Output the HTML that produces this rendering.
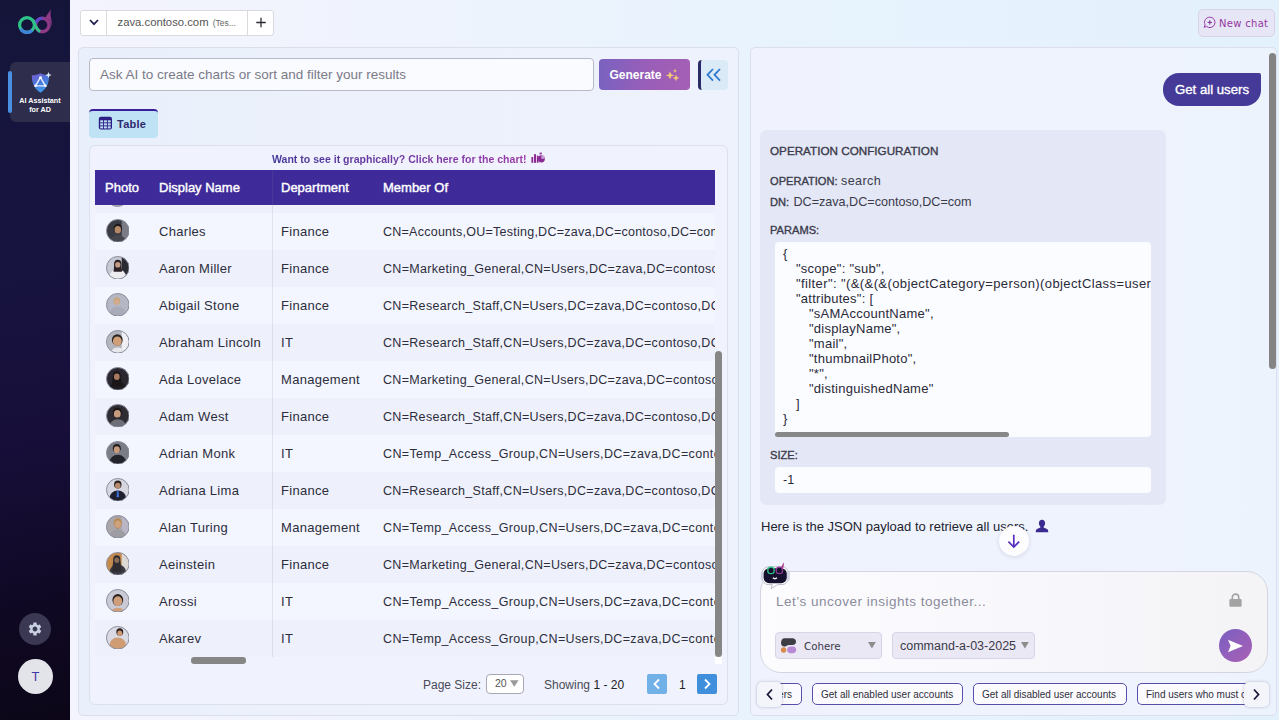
<!DOCTYPE html>
<html lang="en">
<head>
<meta charset="utf-8">
<title>AI Assistant for AD</title>
<style>
*{box-sizing:border-box;margin:0;padding:0}
html,body{width:1279px;height:720px;overflow:hidden}
body{font-family:"Liberation Sans",sans-serif;background:#eef2fd;color:#2b2b3a;position:relative;font-size:13px}
.abs{position:absolute}
#bg{left:70px;top:0;width:1209px;height:720px;background:linear-gradient(90deg,#f3f4fe 0%,#f1f3fd 17%,#e8f3fd 56%,#e3f1fd 100%)}
/* sidebar */
#side{left:0;top:0;width:70px;height:720px;background:linear-gradient(168deg,#15153a 0%,#171440 35%,#170f3a 60%,#0f0822 85%,#0c0618 100%)}
#act{left:10px;top:62px;width:60px;height:60px;background:#2e2d4b;border-radius:6px 0 0 6px}
#actbar{left:8px;top:71px;width:4px;height:42px;background:#4a90e2;border-radius:2px}
.sidetxt{color:#fff;font-weight:bold;font-size:7.2px;line-height:9px;text-align:center;left:10px;width:60px;top:96px}
#gear{left:19px;top:613px;width:32px;height:32px;border-radius:50%;background:#3a3852}
#user{left:18px;top:659px;width:35px;height:35px;border-radius:50%;background:#e3e3ea;color:#4338a8;font-size:13px;text-align:center;line-height:35px}
/* tabs bar */
#tabs{left:80px;top:10px;width:194px;height:26px;background:#fff;border:1px solid #d9d9de;border-radius:3px}
#tabs .d1{left:25px;top:0;width:1px;height:24px;background:#d9d9de}
#tabs .d2{left:166px;top:0;width:1px;height:24px;background:#d9d9de}
#tabtxt{left:117.5px;top:15px;font-size:11.3px;color:#555;white-space:nowrap;line-height:14px}
#tabtxt small{font-size:8.5px;color:#666;margin-left:1px}
/* panels */
.panel{border:1px solid #dcdeec;border-radius:5px;background:linear-gradient(90deg,#eaf0fb,#eef2fc)}
#lp{left:78px;top:47px;width:661px;height:669px}
#rp{left:750px;top:47px;width:527px;height:669px;background:linear-gradient(90deg,#f0f3fd,#edf3fd)}
#ask{left:89px;top:58px;width:505px;height:33px;border:1px solid #b9b9c6;border-radius:4px;background:#fafbff;color:#7a7a88;font-size:13.5px;line-height:31px;padding-left:10px;white-space:nowrap}
#gen{left:599px;top:59px;width:91px;height:31px;border-radius:4px;background:linear-gradient(90deg,#7a62c0 0%,#9a5eb8 55%,#a45fb5 100%);color:#fff;font-weight:bold;font-size:12px;line-height:32px;padding-left:10.5px;white-space:nowrap}
#col{left:698px;top:60px;width:30px;height:30px;border-radius:4px;background:#daeaf6;border-left:3px solid #2b2a66}
#tbtn{left:89px;top:109px;width:69px;height:29px;border-radius:4px;background:#bfe2f5;border-top:2px solid #3b1f9a;color:#2e2a6e;font-weight:bold;font-size:11px;letter-spacing:.25px;line-height:27px;white-space:nowrap}
#tc{left:89px;top:145px;width:639px;height:560px;border:1px solid #dcdfee;border-radius:6px;background:#f0f3fd}
#want{left:272px;top:151.6px;font-size:10.55px;font-weight:bold;color:#6a3aa0;line-height:14px;white-space:nowrap;background:linear-gradient(90deg,#45389a,#9a3aa8);-webkit-background-clip:text;background-clip:text;-webkit-text-fill-color:transparent}
#th{left:95px;top:170px;width:620px;height:35px;background:#3e2b99;color:#fff;font-size:13px;-webkit-text-stroke:.4px #fff;line-height:36px}
#th span{position:absolute;top:0;white-space:nowrap}
.row{left:95px;width:620px;height:37px;font-size:13px;letter-spacing:.3px;color:#2d2d3c;line-height:37px;overflow:hidden}
.row.a{background:#f3f6fe}
.row.b{background:#eef1fb}
.row span{position:absolute;top:0;white-space:nowrap}
.row .n{left:64px}
.row .d{left:186px}
.row .m{left:288px;font-size:12.5px;letter-spacing:.25px;line-height:38px}
.row .m1{letter-spacing:.31px}.row .m2{letter-spacing:.37px}
.row .av{position:absolute;left:10.5px;top:5.8px;width:23.6px;height:23.6px}
#vline{left:272px;top:170px;width:1px;height:487px;background:rgba(120,125,160,.16)}

#vs{left:715px;top:351px;width:7px;height:306px;background:#868686;border-radius:3.5px}
#vsw{left:715px;top:657px;width:7px;height:7px;background:#fff}
#hs{left:191px;top:657px;width:55px;height:6.500px;background:#868686;border-radius:3.2px}
#pg{top:677px;left:90px;width:638px;height:16px;font-size:12px;color:#4a4a58;line-height:16px;white-space:nowrap}
#pg span{position:absolute;top:0}
#psz{left:486px;top:674px;width:38px;height:20px;border:1px solid #a9a9b6;border-radius:4px;background:#fff;font-size:10.5px;color:#555;line-height:17px;padding-left:8px}
.pb{width:20px;height:20px;top:674px;border-radius:2px}
/* right panel */
#newc{left:1198px;top:9px;width:77px;height:28px;border:1px solid #d8d4e8;border-radius:5px;background:#e7e6f6;color:#93389f;font-family:"DejaVu Sans","Liberation Sans",sans-serif;font-size:10px;letter-spacing:.3px;line-height:27px;white-space:nowrap}
#rs{left:1269px;top:53px;width:7px;height:316px;background:#848484;border-radius:3.5px}
#ub{left:1163px;top:73px;width:98px;height:33px;background:#463a99;border-radius:16px 2px 16px 16px;color:#fff;-webkit-text-stroke:.35px #fff;font-size:13.2px;line-height:34px;text-align:center;white-space:nowrap}
#card{left:760px;top:130px;width:406px;height:375px;background:#e3e7f6;border-radius:7px}
.lbl{left:770px;font-size:12px;color:#3b3b4a;white-space:nowrap;line-height:14px}
.lbl b{font-weight:normal;-webkit-text-stroke:.35px #3b3b4a;font-size:11.1px}.lbl b.t{font-size:11.7px}
#code{left:775px;top:242px;width:376px;height:195px;background:#fbfcff;border-radius:4px;overflow:hidden;font-size:13px;letter-spacing:.25px;line-height:15px;color:#2a2a38;padding:4px 0 0 8px;white-space:pre}
#code div{height:15px}
#cs{left:775px;top:432px;width:234px;height:5px;background:#878787;border-radius:2.5px}
#size{left:775px;top:467px;width:376px;height:26px;background:#fbfcff;border-radius:4px;font-size:12.5px;line-height:26px;padding-left:8px;color:#2a2a38}
#here{left:761px;top:519px;font-size:13px;line-height:15px;color:#23232f;white-space:nowrap}
#down{left:999px;top:526px;width:30px;height:30px;border-radius:50%;background:#fdfdff;box-shadow:0 1px 4px rgba(80,80,120,.18)}
#chat{left:760px;top:571px;width:508px;height:102px;border:1px solid #d4d5e0;border-radius:21px;background:linear-gradient(90deg,#fcfcff 0%,#f8f8fc 50%,#f4f4f7 100%)}
#ph{left:776px;top:593px;font-size:13.5px;letter-spacing:.5px;line-height:18px;color:#8b8b9b;white-space:nowrap}
.sel{top:632px;height:27px;border:1px solid #d8d4e8;border-radius:4px;background:#ebe8f5;font-size:11.5px;color:#3a3a48;line-height:27px;white-space:nowrap}
#send{left:1219px;top:629px;width:33px;height:33px;border-radius:50%;background:linear-gradient(135deg,#7a5fc2,#aa60b4)}
.sg{top:683px;height:22px;border:1px solid #5a4fa8;border-radius:5px;background:#fbfbff;font-size:10px;color:#2f2f3a;line-height:22px;white-space:nowrap;overflow:hidden;padding-left:8px}
.nav{top:682px;width:25px;height:25px;border-radius:5px;background:#f4f5fb;box-shadow:0 0 3px rgba(60,60,100,.35)}
</style>
</head>
<body>
<div id="bg" class="abs"></div>
<div id="side" class="abs"></div>
<div id="act" class="abs"></div>
<div id="actbar" class="abs"></div>
<div class="abs sidetxt">AI Assistant<br>for AD</div>
<div id="gear" class="abs"></div>
<div id="user" class="abs">T</div>

<div id="tabs" class="abs"><div class="abs d1"></div><div class="abs d2"></div></div>
<div id="tabtxt" class="abs">zava.contoso.com <small>(Tes...</small></div>

<div id="lp" class="abs panel"></div>
<div id="rp" class="abs panel"></div>

<div id="ask" class="abs">Ask AI to create charts or sort and filter your results</div>
<div id="gen" class="abs">Generate</div>
<div id="col" class="abs"></div>
<div id="tbtn" class="abs"><span style="margin-left:28px">Table</span></div>
<div id="tc" class="abs"></div>
<div id="want" class="abs">Want to see it graphically? Click here for the chart!</div>
<div id="th" class="abs"><span style="left:10px">Photo</span><span style="left:64px">Display Name</span><span style="left:186px">Department</span><span style="left:288px">Member Of</span></div>
<!--ROWS-->
<div class="abs row b" style="top:205px;height:8px"></div>
<div class="abs" style="left:106px;top:205px;width:23px;height:2px;overflow:hidden"><div style="width:23px;height:23px;margin-top:-21px;border-radius:50%;background:#a9abb8;border:1px solid #8b8d9d"></div></div>
<div class="abs row a" style="top:213px"><svg class="av" viewBox="0 0 24 24"><defs><clipPath id="cc"><circle cx="12" cy="12" r="11.500"/></clipPath></defs><g clip-path="url(#cc)"><rect width="24" height="24" fill="#3a3a42"/><rect x="16" width="8" height="24" fill="#7a7b84"/><ellipse cx="12" cy="24.2" rx="8.5" ry="8" fill="#46464e"/><ellipse cx="12" cy="9.6" rx="4.3" ry="4.7" fill="#1c1a1d"/><ellipse cx="12" cy="10.9" rx="3.3" ry="3.7" fill="#b58867"/></g><circle cx="12" cy="12" r="11.500" fill="none" stroke="#8b8d9d"/></svg><span class="n">Charles</span><span class="d">Finance</span><span class="m m0">CN=Accounts,OU=Testing,DC=zava,DC=contoso,DC=com</span></div>
<div class="abs row b" style="top:250px"><svg class="av" viewBox="0 0 24 24"><defs><clipPath id="cc"><circle cx="12" cy="12" r="11.500"/></clipPath></defs><g clip-path="url(#cc)"><rect width="24" height="24" fill="#c6c8d2"/><rect x="16" width="8" height="24" fill="#2a2a33"/><ellipse cx="12" cy="21.4" rx="8.5" ry="8" fill="#ececf0"/><path d="M8.500 8c0-3 7-3 7 0l.8 8h-8.600z" fill="#2a2226"/><ellipse cx="12" cy="7.6" rx="3.6999999999999997" ry="3.9" fill="#2a2226"/><ellipse cx="12" cy="8.9" rx="2.6999999999999997" ry="2.9" fill="#c59d85"/></g><circle cx="12" cy="12" r="11.500" fill="none" stroke="#8b8d9d"/></svg><span class="n">Aaron Miller</span><span class="d">Finance</span><span class="m m1">CN=Marketing_General,CN=Users,DC=zava,DC=contoso,DC=com</span></div>
<div class="abs row a" style="top:287px"><svg class="av" viewBox="0 0 24 24"><defs><clipPath id="cc"><circle cx="12" cy="12" r="11.500"/></clipPath></defs><g clip-path="url(#cc)"><rect width="24" height="24" fill="#b5b7c4"/><rect x="16" width="8" height="24" fill="#b5b7c4"/><ellipse cx="12" cy="21.7" rx="8.5" ry="8" fill="#a9abba"/><ellipse cx="11" cy="8.1" rx="3.5" ry="3.7" fill="#c9a67d"/><ellipse cx="11" cy="9.4" rx="2.5" ry="2.7" fill="#d3ac90"/></g><circle cx="12" cy="12" r="11.500" fill="none" stroke="#8b8d9d"/></svg><span class="n">Abigail Stone</span><span class="d">Finance</span><span class="m m1">CN=Research_Staff,CN=Users,DC=zava,DC=contoso,DC=com</span></div>
<div class="abs row b" style="top:324px"><svg class="av" viewBox="0 0 24 24"><defs><clipPath id="cc"><circle cx="12" cy="12" r="11.500"/></clipPath></defs><g clip-path="url(#cc)"><rect width="24" height="24" fill="#b4b6be"/><rect x="16" width="8" height="24" fill="#f0f0f4"/><ellipse cx="12" cy="25.9" rx="8.5" ry="8" fill="#e8e8ec"/><ellipse cx="11.5" cy="10.1" rx="5.5" ry="5.9" fill="#2a2424"/><ellipse cx="11.5" cy="11.4" rx="4.5" ry="4.9" fill="#d2a078"/></g><circle cx="12" cy="12" r="11.500" fill="none" stroke="#8b8d9d"/></svg><span class="n">Abraham Lincoln</span><span class="d">IT</span><span class="m m1">CN=Research_Staff,CN=Users,DC=zava,DC=contoso,DC=com</span></div>
<div class="abs row a" style="top:361px"><svg class="av" viewBox="0 0 24 24"><defs><clipPath id="cc"><circle cx="12" cy="12" r="11.500"/></clipPath></defs><g clip-path="url(#cc)"><rect width="24" height="24" fill="#2a2730"/><rect x="16" width="8" height="24" fill="#2a2730"/><ellipse cx="12" cy="22.8" rx="8.5" ry="8" fill="#1d1b20"/><path d="M7 9.500c0-4 8-4 8 0l1.500 10h-11z" fill="#1a1618"/><ellipse cx="11" cy="8.6" rx="3.9" ry="4.3" fill="#1a1618"/><ellipse cx="11" cy="9.9" rx="2.9" ry="3.3" fill="#a87a62"/></g><circle cx="12" cy="12" r="11.500" fill="none" stroke="#8b8d9d"/></svg><span class="n">Ada Lovelace</span><span class="d">Management</span><span class="m m1">CN=Marketing_General,CN=Users,DC=zava,DC=contoso,DC=com</span></div>
<div class="abs row b" style="top:398px"><svg class="av" viewBox="0 0 24 24"><defs><clipPath id="cc"><circle cx="12" cy="12" r="11.500"/></clipPath></defs><g clip-path="url(#cc)"><rect width="24" height="24" fill="#2f2b32"/><rect x="16" width="8" height="24" fill="#2f2b32"/><ellipse cx="12" cy="23.4" rx="8.5" ry="8" fill="#6d6e76"/><ellipse cx="11.5" cy="8.6" rx="4.5" ry="4.9" fill="#1a1616"/><ellipse cx="11.5" cy="9.9" rx="3.5" ry="3.9000000000000004" fill="#c79b7e"/></g><circle cx="12" cy="12" r="11.500" fill="none" stroke="#8b8d9d"/></svg><span class="n">Adam West</span><span class="d">Finance</span><span class="m m1">CN=Research_Staff,CN=Users,DC=zava,DC=contoso,DC=com</span></div>
<div class="abs row a" style="top:435px"><svg class="av" viewBox="0 0 24 24"><defs><clipPath id="cc"><circle cx="12" cy="12" r="11.500"/></clipPath></defs><g clip-path="url(#cc)"><rect width="24" height="24" fill="#7b7d86"/><rect x="16" width="8" height="24" fill="#7b7d86"/><ellipse cx="12" cy="22.0" rx="8.5" ry="8" fill="#23232b"/><ellipse cx="11" cy="7.6" rx="4.1000000000000005" ry="4.5" fill="#1f1c1e"/><ellipse cx="11" cy="8.9" rx="3.1" ry="3.5" fill="#c89a7c"/></g><circle cx="12" cy="12" r="11.500" fill="none" stroke="#8b8d9d"/></svg><span class="n">Adrian Monk</span><span class="d">IT</span><span class="m m2">CN=Temp_Access_Group,CN=Users,DC=zava,DC=contoso,DC=com</span></div>
<div class="abs row b" style="top:472px"><svg class="av" viewBox="0 0 24 24"><defs><clipPath id="cc"><circle cx="12" cy="12" r="11.500"/></clipPath></defs><g clip-path="url(#cc)"><rect width="24" height="24" fill="#d5d6df"/><rect x="16" width="8" height="24" fill="#d5d6df"/><ellipse cx="12" cy="20.6" rx="8.5" ry="8" fill="#1e2030"/><path d="M11.300 12.500h1.400l.6 6-1.300 1.500-1.300-1.500z" fill="#3a6fd0"/><ellipse cx="12" cy="6.6" rx="3.8" ry="4.1" fill="#2a2324"/><ellipse cx="12" cy="7.9" rx="2.8" ry="3.1" fill="#b98a6c"/></g><circle cx="12" cy="12" r="11.500" fill="none" stroke="#8b8d9d"/></svg><span class="n">Adriana Lima</span><span class="d">Finance</span><span class="m m1">CN=Research_Staff,CN=Users,DC=zava,DC=contoso,DC=com</span></div>
<div class="abs row a" style="top:509px"><svg class="av" viewBox="0 0 24 24"><defs><clipPath id="cc"><circle cx="12" cy="12" r="11.500"/></clipPath></defs><g clip-path="url(#cc)"><rect width="24" height="24" fill="#a9a5a8"/><rect x="16" width="8" height="24" fill="#b9b5c4"/><ellipse cx="12" cy="22.7" rx="8.5" ry="8" fill="#9c9ca2"/><ellipse cx="12" cy="11.800" rx="2.600" ry="2.200" fill="#a87440"/><ellipse cx="12" cy="8.1" rx="4.2" ry="4.7" fill="#b98a50"/><ellipse cx="12" cy="9.4" rx="3.1999999999999997" ry="3.7" fill="#d0a27c"/></g><circle cx="12" cy="12" r="11.500" fill="none" stroke="#8b8d9d"/></svg><span class="n">Alan Turing</span><span class="d">Management</span><span class="m m2">CN=Temp_Access_Group,CN=Users,DC=zava,DC=contoso,DC=com</span></div>
<div class="abs row b" style="top:546px"><svg class="av" viewBox="0 0 24 24"><defs><clipPath id="cc"><circle cx="12" cy="12" r="11.500"/></clipPath></defs><g clip-path="url(#cc)"><rect width="24" height="24" fill="#c58a4c"/><rect x="16" width="8" height="24" fill="#dcd8d4"/><ellipse cx="12" cy="20.7" rx="8.5" ry="8" fill="#3a3a42"/><path d="M7.500 8c0-3.500 7-3.500 7 0l1.500 12h-10z" fill="#2e2c30"/><ellipse cx="11" cy="7.1" rx="3.5" ry="3.7" fill="#2e2c30"/><ellipse cx="11" cy="8.4" rx="2.5" ry="2.7" fill="#8a6a58"/></g><circle cx="12" cy="12" r="11.500" fill="none" stroke="#8b8d9d"/></svg><span class="n">Aeinstein</span><span class="d">Finance</span><span class="m m1">CN=Marketing_General,CN=Users,DC=zava,DC=contoso,DC=com</span></div>
<div class="abs row a" style="top:583px"><svg class="av" viewBox="0 0 24 24"><defs><clipPath id="cc"><circle cx="12" cy="12" r="11.500"/></clipPath></defs><g clip-path="url(#cc)"><rect width="24" height="24" fill="#c9cad6"/><rect x="16" width="8" height="24" fill="#c9cad6"/><ellipse cx="12" cy="27.1" rx="8.5" ry="8" fill="#cfa07e"/><ellipse cx="12" cy="11.1" rx="5.5" ry="6.1" fill="#2a2020"/><ellipse cx="12" cy="12.4" rx="4.5" ry="5.1" fill="#cf9f7c"/></g><circle cx="12" cy="12" r="11.500" fill="none" stroke="#8b8d9d"/></svg><span class="n">Arossi</span><span class="d">IT</span><span class="m m2">CN=Temp_Access_Group,CN=Users,DC=zava,DC=contoso,DC=com</span></div>
<div class="abs row b" style="top:620px"><svg class="av" viewBox="0 0 24 24"><defs><clipPath id="cc"><circle cx="12" cy="12" r="11.500"/></clipPath></defs><g clip-path="url(#cc)"><rect width="24" height="24" fill="#d9dae4"/><rect x="16" width="8" height="24" fill="#d9dae4"/><ellipse cx="12" cy="19.7" rx="8.5" ry="8" fill="#d09c74"/><ellipse cx="14" cy="6.1" rx="3.5" ry="3.7" fill="#2a2020"/><ellipse cx="14" cy="7.4" rx="2.5" ry="2.7" fill="#cf9a72"/></g><circle cx="12" cy="12" r="11.500" fill="none" stroke="#8b8d9d"/></svg><span class="n">Akarev</span><span class="d">IT</span><span class="m m2">CN=Temp_Access_Group,CN=Users,DC=zava,DC=contoso,DC=com</span></div>
<!--/ROWS-->
<div id="vline" class="abs"></div>

<div id="vs" class="abs"></div>
<div id="hs" class="abs"></div><div id="vsw" class="abs"></div>
<div id="pg" class="abs"><span style="left:333px">Page Size:</span><span style="left:454px">Showing <span style="position:static;color:#222">1 - 20</span></span><span style="left:589px;color:#222">1</span></div>
<div id="psz" class="abs">20</div>
<div class="abs pb" style="left:647px;background:#72b0e8"></div>
<div class="abs pb" style="left:697px;background:#3f8fdc"></div>

<div id="newc" class="abs"><span style="margin-left:20px">New chat</span></div>
<div id="rs" class="abs"></div>
<div id="ub" class="abs">Get all users</div>
<div id="card" class="abs"></div>
<div class="abs lbl" style="top:144px"><b class="t">OPERATION CONFIGURATION</b></div>
<div class="abs lbl" style="top:174px"><b>OPERATION:</b> <span style="font-size:12.6px;letter-spacing:.4px">search</span></div>
<div class="abs lbl" style="top:195px"><b>DN:</b> <span style="font-size:12.6px;margin-left:1px">DC=zava,DC=contoso,DC=com</span></div>
<div class="abs lbl" style="top:223px"><b>PARAMS:</b></div>
<div id="code" class="abs"><div>{</div><div style="padding-left:13px">"scope": "sub",</div><div style="padding-left:13px;letter-spacing:.4px">"filter": "(&amp;(&amp;(&amp;(objectCategory=person)(objectClass=user)</div><div style="padding-left:13px">"attributes": [</div><div style="padding-left:26px">"sAMAccountName",</div><div style="padding-left:26px">"displayName",</div><div style="padding-left:26px">"mail",</div><div style="padding-left:26px">"thumbnailPhoto",</div><div style="padding-left:26px">"*",</div><div style="padding-left:26px">"distinguishedName"</div><div style="padding-left:13px">]</div><div>}</div></div>
<div id="cs" class="abs"></div>
<div class="abs lbl" style="top:448px"><b>SIZE:</b></div>
<div id="size" class="abs">-1</div>
<div id="here" class="abs">Here is the JSON payload to retrieve all users.</div>
<div id="down" class="abs"></div>
<div id="chat" class="abs"></div>
<div id="ph" class="abs">Let&rsquo;s uncover insights together...</div>
<div class="abs sel" style="left:775px;width:107px"><span style="margin-left:28px;font-family:'DejaVu Sans','Liberation Sans',sans-serif;font-size:10.3px">Cohere</span></div>
<div class="abs sel" style="left:892px;width:143px"><span style="margin-left:7px;font-size:12.5px">command-a-03-2025</span></div>
<div id="send" class="abs"></div>
<div class="abs" style="left:760px;top:683px;width:42px;height:22px;overflow:hidden"><div class="abs sg" style="top:0;right:0;width:92px;text-align:right;padding:0 9px 0 0">Get all users</div></div>
<div class="abs sg" style="left:812px;width:151px">Get all enabled user accounts</div>
<div class="abs sg" style="left:973px;width:154px">Get all disabled user accounts</div>
<div class="abs sg" style="left:1137px;width:125px;border-right:none">Find users who must change</div>
<div class="abs nav" style="left:757px"></div>
<div class="abs nav" style="left:1244px"></div>

<!-- icons -->
<svg class="abs" style="left:14px;top:6px" width="42" height="32" viewBox="14 6 42 32">
<circle cx="27" cy="25" r="7.400" fill="none" stroke="#2ec488" stroke-width="3.200"/>
<path d="M20.600 28.700a7.400 7.400 0 0 0 11.600 1.600" fill="none" stroke="#3f82dc" stroke-width="3.200"/>
<circle cx="42.300" cy="25" r="6.700" fill="none" stroke="#8e3a86" stroke-width="3.400"/>
<path d="M35.800 23.300a6.700 6.700 0 0 1 7-5" fill="none" stroke="#5a48cc" stroke-width="3"/>
<path d="M33 20.200c1.600 3.400 2.600 8.600 7 11.600" fill="none" stroke="#2ec488" stroke-width="3"/>
<path d="M51.200 9c-1.400 3-5 5.600-5.600 9.200l3.400 1.600c1.800 2.200 2.200 5 1.400 7.600 2.200-3.200 1.200-6.800.4-10.200-.6-2.800-.2-5.600.4-8.200z" fill="#8e3a86"/>
</svg>
<svg class="abs" style="left:29.5px;top:71.5px" width="22" height="22" viewBox="0 0 20 21" preserveAspectRatio="none"><defs><linearGradient id="sh" x1="0" y1="0" x2=".4" y2="1"><stop offset="0" stop-color="#7a5ad0"/><stop offset=".55" stop-color="#4a78dc"/><stop offset="1" stop-color="#3d9bea"/></linearGradient></defs>
<path d="M9.5 1.200c2.600 1.400 5.200 2 7.800 2 .3 6.500-1.800 12.800-7.800 16.600C3.500 16 1.400 9.700 1.700 3.200c2.600 0 5.200-.6 7.800-2z" fill="url(#sh)"/>
<path d="M9.500 5.200L5 13.200h9z" fill="none" stroke="#e8ecff" stroke-width="1.300" stroke-linejoin="round"/><circle cx="9.500" cy="5.300" r="1.300" fill="#fff"/><circle cx="5" cy="13.200" r="1.200" fill="#fff"/><circle cx="14" cy="13.200" r="1.200" fill="#fff"/>
<path d="M16.800 0l.8 2.100 2.100.8-2.100.8-.8 2.100-.8-2.100-2.100-.8 2.100-.8z" fill="#d9ecff"/></svg>
<svg class="abs" style="left:27px;top:621px" width="16" height="16" viewBox="0 0 24 24"><path fill="#c9d0e2" d="M19.140 12.940c.04-.3.060-.61.060-.94 0-.32-.02-.64-.07-.94l2.030-1.580a.49.49 0 0 0 .12-.61l-1.920-3.320a.488.488 0 0 0-.59-.22l-2.390.96c-.5-.38-1.030-.7-1.620-.94l-.36-2.540a.484.484 0 0 0-.48-.41h-3.840c-.24 0-.43.170-.47.410l-.36 2.540c-.59.240-1.130.570-1.620.940l-2.390-.96c-.22-.08-.47 0-.59.220L2.740 8.870c-.12.210-.08.470.12.610l2.030 1.580c-.05.300-.09.630-.09.940s.02.640.07.940l-2.030 1.580a.49.49 0 0 0-.12.610l1.920 3.320c.12.220.37.290.59.220l2.390-.96c.5.380 1.030.7 1.620.94l.36 2.540c.05.240.24.410.48.410h3.840c.24 0 .44-.17.470-.41l.36-2.540c.59-.24 1.130-.56 1.620-.94l2.390.96c.22.08.47 0 .59-.22l1.920-3.320c.12-.22.070-.47-.12-.61l-2.010-1.580zM12 15.600c-1.980 0-3.600-1.620-3.600-3.600s1.620-3.600 3.600-3.600 3.600 1.620 3.600 3.600-1.620 3.600-3.600 3.600z"/></svg>
<svg class="abs" style="left:89px;top:18px" width="10" height="9" viewBox="0 0 10 9"><path d="M1 2l4 4.200L9 2" fill="none" stroke="#1e1e50" stroke-width="1.700"/></svg>
<svg class="abs" style="left:255px;top:17px" width="12" height="11" viewBox="0 0 12 11"><path d="M6 .700v9.600M1.300 5.500h9.400" fill="none" stroke="#2a2a33" stroke-width="1.300"/></svg>
<svg class="abs" style="left:665px;top:68px" width="16" height="14" viewBox="0 0 16 14"><path d="M5 3.200l1.200 3 3 1.200-3 1.200-1.200 3-1.200-3-3-1.200 3-1.200z" fill="#f3c576"/><path d="M11 6.500l1 2.400 2.400 1-2.400 1-1 2.400-1-2.400-2.400-1 2.400-1z" fill="#f3c576"/><path d="M10 .800l.6 1.500 1.500.6-1.500.6-.6 1.500-.6-1.500-1.500-.6 1.500-.6z" fill="#f3c576"/></svg>
<svg class="abs" style="left:706px;top:68px" width="16" height="14" viewBox="0 0 16 14"><path d="M7 1L1.500 6.800 7 12.600M14 1L8.500 6.800 14 12.600" fill="none" stroke="#2f79cf" stroke-width="1.800"/></svg>
<svg class="abs" style="left:98px;top:116px" width="15" height="14" viewBox="0 0 15 14"><rect x=".8" y=".8" width="13.200" height="12.800" rx="2" fill="#2e1f86"/><g fill="#bcdcf4"><rect x="2.200" y="4.300" width="2.900" height="2.100"/><rect x="6" y="4.300" width="2.900" height="2.100"/><rect x="9.800" y="4.300" width="2.900" height="2.100"/><rect x="2.200" y="7.300" width="2.900" height="2.100"/><rect x="6" y="7.300" width="2.900" height="2.100"/><rect x="9.800" y="7.300" width="2.900" height="2.100"/><rect x="2.200" y="10.300" width="2.900" height="2.100"/><rect x="6" y="10.300" width="2.900" height="2.100"/><rect x="9.800" y="10.300" width="2.900" height="2.100"/></g></svg>
<svg class="abs" style="left:531px;top:152px" width="15" height="12" viewBox="0 0 15 12"><g fill="#8a2a92"><rect x=".4" y="5" width="1.800" height="5.800"/><rect x="3" y="2.200" width="2" height="8.600"/><rect x="5.800" y="3.600" width="1.600" height="7.200"/><circle cx="10.300" cy="6.800" r="3.600"/><rect x="8.600" y=".600" width="2.200" height="1.800"/></g><path d="M10.300 6.800V3.200a3.600 3.600 0 0 1 3.600 3.600z" fill="#c9a0d8"/></svg>
<svg class="abs" style="left:510px;top:680px" width="9" height="7" viewBox="0 0 9 7"><path d="M0 .3h8.600L4.300 6.800z" fill="#9a9a9a"/></svg>
<svg class="abs" style="left:652px;top:678px" width="10" height="12" viewBox="0 0 10 12"><path d="M7 1.500L2.500 6 7 10.500" fill="none" stroke="#fff" stroke-width="1.800"/></svg>
<svg class="abs" style="left:702px;top:678px" width="10" height="12" viewBox="0 0 10 12"><path d="M3 1.500L7.500 6 3 10.500" fill="none" stroke="#fff" stroke-width="1.800"/></svg>
<svg class="abs" style="left:1203px;top:16px" width="14" height="13" viewBox="0 0 14 13"><path d="M6.800 1.200a5.200 5.200 0 1 1-3.300 9.200L1.200 11.400l.9-2.600A5.200 5.200 0 0 1 6.800 1.200z" fill="none" stroke="#9a3aa8" stroke-width="1"/><path d="M6.800 4.200v4.400M4.600 6.400H9" stroke="#7a2a90" stroke-width="1"/></svg>
<svg class="abs" style="left:1035px;top:519px" width="14" height="14" viewBox="0 0 14 14"><path d="M7 .8c1.900 0 3.100 1.400 3.100 3.300 0 1.500-.6 2.900-1.500 3.600v.9l3.400 1.500c.8.400 1.200 1.100 1.200 2v1.100H.8v-1.100c0-.9.400-1.600 1.200-2l3.400-1.500v-.9C4.500 7 3.900 5.600 3.900 4.100 3.900 2.200 5.100.8 7 .8z" fill="#3a2a90"/></svg>
<svg class="abs" style="left:1006px;top:533px" width="16" height="16" viewBox="0 0 16 16"><path d="M7.800 1.800v12M2.400 8.600l5.400 5.400 5.400-5.400" fill="none" stroke="#5a2ec0" stroke-width="1.700"/></svg>
<svg class="abs" style="left:760px;top:561px" width="31" height="29" viewBox="0 0 31 29">
<path d="M8.500 5.800h13.500a6.200 6.200 0 0 1 6.200 6.200v5.400a6.200 6.200 0 0 1-6.200 6.200h-4.500l-6.500 4.200 1.400-4.200h-3.900a6.200 6.200 0 0 1-6.200-6.200v-5.400a6.200 6.200 0 0 1 6.200-6.200z" fill="#fff" stroke="#b4b4c4" stroke-width=".9"/>
<rect x=".8" y="10.800" width="2.600" height="8.400" rx="1.300" fill="#cfd2e4"/><rect x="27.200" y="10.800" width="2.600" height="8.400" rx="1.300" fill="#cfd2e4"/>
<rect x="3.600" y="7.200" width="23.200" height="15" rx="5.600" fill="#14102e"/>
<circle cx="11" cy="9.400" r="3.200" fill="#14102e" stroke="#2ec488" stroke-width="1.300"/><circle cx="19.400" cy="9.400" r="3.200" fill="#14102e" stroke="#8e3a96" stroke-width="1.300"/>
<path d="M21.200 6.800c.6-2.200 1.600-3.800 2.800-5.200 0 2.400-.4 4.600-1.200 6.600z" fill="#b03a8e"/>
<path d="M12.800 16.800c1.200 1.100 3 1.100 4.200 0" fill="none" stroke="#fff" stroke-width="1.200"/></svg>
<svg class="abs" style="left:1229px;top:593px" width="13" height="14" viewBox="0 0 13 14"><path d="M3.300 6.500V4.300a3.200 3.200 0 0 1 6.400 0v2.200" fill="none" stroke="#a2a2a2" stroke-width="1.600"/><rect x=".4" y="6" width="12.200" height="7.800" rx="1.200" fill="#a2a2a2"/></svg>
<svg class="abs" style="left:780px;top:637px" width="17" height="17" viewBox="0 0 17 17"><path d="M4.500 1.300h8c2 0 3.500 1.500 3.500 3.500 0 2.100-1.600 3.300-3.600 3.300H9c-1.600 0-2.200.8-3.600 1.300C3 10.200 1 8.600 1 6c0-2.700 1.500-4.700 3.500-4.700z" fill="#3d3d45"/><circle cx="3.600" cy="13" r="2.700" fill="#d98c4a"/><path d="M10.200 9.500h2.800c2 0 3.200 1.400 3.200 3.300 0 2-1.400 3.400-3.300 3.400h-2.400c-2 0-3.400-1.400-3.400-3.300 0-2 1.200-3.400 3.100-3.400z" fill="#b88ad6"/></svg>
<svg class="abs" style="left:868px;top:642px" width="8" height="7" viewBox="0 0 8 7"><path d="M0 0h7.800L3.900 6.600z" fill="#8c8c8c"/></svg>
<svg class="abs" style="left:1021px;top:642px" width="8" height="7" viewBox="0 0 8 7"><path d="M0 0h7.800L3.900 6.600z" fill="#8c8c8c"/></svg>
<svg class="abs" style="left:1227px;top:639px" width="17" height="14" viewBox="0 0 17 14"><path d="M1 .800L16 7 1 13.200 3.600 7z" fill="#fff"/></svg>
<svg class="abs" style="left:765px;top:688px" width="10" height="13" viewBox="0 0 10 13"><path d="M7 1.500L2.500 6.500 7 11.500" fill="none" stroke="#1a1a3a" stroke-width="1.800"/></svg>
<svg class="abs" style="left:1251px;top:688px" width="10" height="13" viewBox="0 0 10 13"><path d="M3 1.500L7.500 6.500 3 11.500" fill="none" stroke="#1a1a3a" stroke-width="1.800"/></svg>
</body>
</html>
